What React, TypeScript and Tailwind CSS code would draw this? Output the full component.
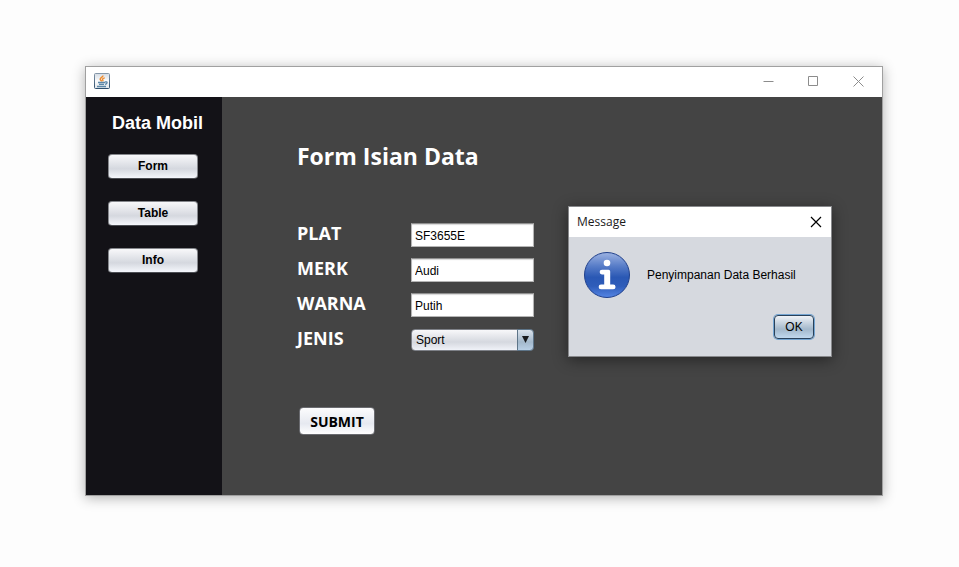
import { useState } from "react";
import type { ReactNode } from "react";

function JavaIcon() {
  return (
    <svg width="16" height="16" viewBox="0 0 16 16" aria-hidden="true">
      <defs>
        <linearGradient id="java-bg" x1="0" y1="0" x2="0" y2="1">
          <stop offset="0" stopColor="#d3dbe3" />
          <stop offset="0.5" stopColor="#fbfbfc" />
          <stop offset="1" stopColor="#dfe5ea" />
        </linearGradient>
        <linearGradient id="java-edge" x1="0" y1="0" x2="0" y2="1">
          <stop offset="0" stopColor="#8496a8" />
          <stop offset="1" stopColor="#2f4f6e" />
        </linearGradient>
      </defs>
      <rect x="0.5" y="0.5" width="15" height="15" rx="1" fill="url(#java-bg)" stroke="url(#java-edge)" />
      <path d="M8.8 2.4C9.4 4 5.8 4.8 6.2 6.4C6.4 7.3 7.4 7.5 7.8 8.4" fill="none" stroke="#ee8a2c" strokeWidth="1.5" />
      <path d="M10.8 4.8C9.2 5.2 7.8 6 8.8 7C9.3 7.6 9 8 8.6 8.4" fill="none" stroke="#ee8a2c" strokeWidth="1.3" />
      <path d="M4 9.5H11M5 11.4H10M3 13.5H12" fill="none" stroke="#5d87a8" strokeWidth="1.4" />
      <path d="M11 9C14 8.2 13.6 10.8 11 11.4" fill="none" stroke="#5d87a8" strokeWidth="1.3" />
    </svg>
  );
}

function InfoIcon() {
  return (
    <svg width="48" height="48" viewBox="0 0 48 48" aria-hidden="true">
      <defs>
        <linearGradient id="info-bg" x1="0" y1="0" x2="0" y2="1">
          <stop offset="0" stopColor="#9db3e2" />
          <stop offset="0.3" stopColor="#587dc8" />
          <stop offset="0.55" stopColor="#2a58b4" />
          <stop offset="0.75" stopColor="#2f5dba" />
          <stop offset="1" stopColor="#5585e4" />
        </linearGradient>
      </defs>
      <circle cx="24" cy="24" r="22.5" fill="url(#info-bg)" stroke="#21418c" />
      <circle cx="24" cy="12" r="3.3" fill="#fff" />
      <path
        d="M19 18.7H25.5Q27.2 18.7 27.2 20.4V33.6H30.2A2.35 2.35 0 0 1 30.2 38.3H18A2.35 2.35 0 0 1 18 33.6H21.2V23.4H19A2.35 2.35 0 0 1 19 18.7Z"
        fill="#fff"
      />
    </svg>
  );
}

function WindowButton({ label, children }: { label: string; children: ReactNode }) {
  return (
    <button type="button" aria-label={label} className="flex h-7 w-[45px] items-center justify-center text-[#8c8c8c]">
      <svg width="11" height="11" viewBox="0 0 11 11" fill="none" stroke="currentColor" aria-hidden="true">
        {children}
      </svg>
    </button>
  );
}

function NavButton({ children }: { children: ReactNode }) {
  return (
    <button
      type="button"
      className="h-[25px] w-[90px] rounded-[4px] border border-[#85878c] border-b-[#4c4e54] bg-linear-to-b from-[#f8f8fa] via-[#d5d8df] via-60% to-[#f5f7fc] pb-0.5 text-center text-xs leading-5 font-bold text-black"
    >
      {children}
    </button>
  );
}

function Field({ id, label, children }: { id: string; label: string; children: ReactNode }) {
  return (
    <div className="flex h-[25px] items-center">
      <label htmlFor={id} className="w-[114px] pb-1 font-['Open_Sans','Noto_Sans',sans-serif] text-lg leading-6 font-bold text-white">
        {label}
      </label>
      {children}
    </div>
  );
}

function TextField({ id, label, initial }: { id: string; label: string; initial: string }) {
  const [value, setValue] = useState(initial);
  return (
    <Field id={id} label={label}>
      <input
        id={id}
        type="text"
        value={value}
        onChange={(e) => setValue(e.target.value)}
        className="h-6 w-[123px] border border-[#b5b5b5] border-t-[#8f8f8f] bg-white px-[3px] pt-[3px] text-xs leading-4 text-black inset-shadow-[0_1px_1px_#d8d8d8]"
      />
    </Field>
  );
}

export default function App() {
  return (
    <div className="flex min-h-screen bg-[#fdfdfd] pt-[66px] pr-[76px] pb-[71px] pl-[85px] font-['Liberation_Sans',Arial,sans-serif]">
      <div className="relative flex flex-1 flex-col border border-[#a0a0a0] bg-white shadow-[0_2px_12px_rgba(0,0,0,0.3)]">
        <header className="flex h-[30px] items-center pr-px pb-0.5 pl-2">
          <JavaIcon />
          <div className="ml-auto flex">
            <WindowButton label="Minimize">
              <path d="M0.5 5.5H10.5" />
            </WindowButton>
            <WindowButton label="Maximize">
              <path d="M0.5 0.5H9.5V9.5H0.5Z" />
            </WindowButton>
            <WindowButton label="Close">
              <path d="M0.5 0.5L10.5 10.5M10.5 0.5L0.5 10.5" />
            </WindowButton>
          </div>
        </header>

        <div className="flex flex-1">
          <nav className="w-[136px] bg-[#131217] pt-4">
            <h1 className="pl-[26px] text-lg leading-5 font-bold whitespace-nowrap text-white">Data Mobil</h1>
            <div className="mt-[21px] flex flex-col gap-[22px] pl-[22px]">
              <NavButton>Form</NavButton>
              <NavButton>Table</NavButton>
              <NavButton>Info</NavButton>
            </div>
          </nav>

          <main className="flex-1 bg-[#444444] pt-[43px] pl-[75px]">
            <h2 className="font-['Open_Sans','Noto_Sans',sans-serif] text-[23px] leading-8 font-bold text-white">
              Form Isian Data
            </h2>
            <form onSubmit={(e) => e.preventDefault()} className="mt-[50px]">
              <div className="flex flex-col gap-2.5">
                <TextField id="plat" label="PLAT" initial="SF3655E" />
                <TextField id="merk" label="MERK" initial="Audi" />
                <TextField id="warna" label="WARNA" initial="Putih" />
                <Field id="jenis" label="JENIS">
                  <div className="relative h-[22px] w-[123px]">
                    <select
                      id="jenis"
                      defaultValue="Sport"
                      className="block h-full w-full appearance-none rounded-[4px] border border-[#7d8087] bg-linear-to-b from-[#f8f8fa] via-[#d5d8df] via-60% to-[#f0f2f8] pt-px pl-1 text-xs text-black"
                    >
                      <option>Sport</option>
                    </select>
                    <span className="pointer-events-none absolute inset-y-0 right-0 flex w-[17px] items-center justify-center rounded-r-[4px] border border-[#5d7488] bg-linear-to-b from-[#dbe3ec] via-[#a3b8cb] via-60% to-[#b9d0e6]">
                      <svg width="7" height="7" viewBox="0 0 7 7" aria-hidden="true">
                        <path d="M0 0H7L3.5 7Z" fill="#17191c" />
                      </svg>
                    </span>
                  </div>
                </Field>
              </div>
              <button
                type="submit"
                className="mt-[55px] ml-0.5 block h-7 w-[76px] rounded-[4px] border border-[#6a6b70] bg-linear-to-b from-[#fcfcfd] via-[#e6e9f0] via-60% to-[#ffffff] pt-0.5 font-['Open_Sans','Noto_Sans',sans-serif] text-sm leading-5 font-bold text-black"
              >
                SUBMIT
              </button>
            </form>
          </main>
        </div>

        <div
          role="dialog"
          aria-labelledby="message-title"
          className="absolute top-[139px] left-[482px] w-[264px] border border-[#88898c] bg-[#d6d9df] shadow-[0_3px_14px_rgba(0,0,0,0.45)]"
        >
          <div className="flex h-[30px] items-center justify-between bg-white pr-[9px] pl-2">
            <h3 id="message-title" className="font-['Open_Sans','Noto_Sans',sans-serif] text-xs leading-4 text-[#1a1a1a]">
              Message
            </h3>
            <button type="button" aria-label="Close message" className="text-black">
              <svg width="12" height="12" viewBox="0 0 12 12" fill="none" stroke="currentColor" strokeWidth="1.2" aria-hidden="true">
                <path d="M1 1L11 11M11 1L1 11" />
              </svg>
            </button>
          </div>
          <div className="flex items-center pt-3.5 pl-3.5">
            <InfoIcon />
            <p className="ml-4 text-xs leading-4 text-black">Penyimpanan Data Berhasil</p>
          </div>
          <div className="flex justify-end pt-4 pr-[17px] pb-[17px]">
            <button
              type="button"
              className="h-6 w-10 rounded-[4px] border border-[#29415a] bg-linear-to-b from-[#f0f3f7] via-[#a3b8cb] via-60% to-[#c0d8ee] text-xs leading-5 text-black ring-1 ring-[#73a4d1]"
            >
              OK
            </button>
          </div>
        </div>
      </div>
    </div>
  );
}
